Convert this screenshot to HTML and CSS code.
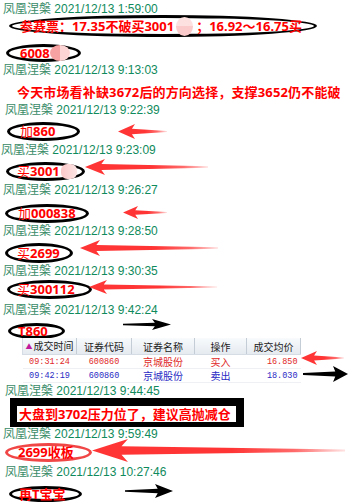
FILE: index.html
```html
<!DOCTYPE html>
<html lang="zh-CN">
<head>
  <meta charset="UTF-8" />
  <meta name="viewport" content="width=device-width, initial-scale=1.0" />
  <title>凤凰涅槃 盘中记录</title>
  <link rel="stylesheet" href="styles.css">
</head>
<body>
  <div class="feed">
    <div class="meta"><span class="nick">凤凰涅槃</span> 2021/12/13 1:59:00</div>
    <div class="post post-first">
      <div class="ring ring-ticket">参赛票：17.35不破买3001<i class="blur blur-wide"></i>；16.92～16.75买</div>
      <div class="ring ring-6008">6008<i class="blur blur-half"></i></div>
    </div>

    <div class="meta"><span class="nick">凤凰涅槃</span> 2021/12/13 9:13:03</div>
    <div class="post post-note">今天市场看补缺3672后的方向选择，支撑3652仍不能破</div>

    <div class="meta meta-in"><span class="nick">凤凰涅槃</span> 2021/12/13 9:22:39</div>
    <div class="post">
      <div class="ring ring-860"><span class="thin">加</span>860</div>
      <div class="arrow arrow-red arrow-860"></div>
    </div>

    <div class="meta meta-out"><span class="nick">凤凰涅槃</span> 2021/12/13 9:23:09</div>
    <div class="post">
      <div class="ring ring-3001"><span class="thin">买</span>3001<i class="blur blur-small"></i></div>
      <div class="arrow arrow-red arrow-3001"></div>
    </div>

    <div class="meta"><span class="nick">凤凰涅槃</span> 2021/12/13 9:26:27</div>
    <div class="post post-tall">
      <div class="ring ring-838"><span class="thin">加</span>000838</div>
      <div class="arrow arrow-red arrow-838"></div>
    </div>

    <div class="meta"><span class="nick">凤凰涅槃</span> 2021/12/13 9:28:50</div>
    <div class="post">
      <div class="ring ring-2699"><span class="thin">买</span>2699</div>
      <div class="arrow arrow-red arrow-2699"></div>
    </div>

    <div class="meta"><span class="nick">凤凰涅槃</span> 2021/12/13 9:30:35</div>
    <div class="post post-short">
      <div class="ring ring-112"><span class="thin">买</span>300112</div>
      <div class="arrow arrow-red arrow-112"></div>
    </div>

    <div class="meta"><span class="nick">凤凰涅槃</span> 2021/12/13 9:42:24</div>
    <div class="post post-trade">
      <div class="trade-head">
        <div class="ring ring-t860">T860</div>
        <div class="arrow arrow-black arrow-t860"></div>
      </div>
      <div class="trade-row">
        <table class="deals">
          <colgroup>
            <col class="c-time"><col class="c-code"><col class="c-name"><col class="c-op"><col class="c-price">
          </colgroup>
          <thead>
            <tr>
              <th><span class="sort">▲</span>成交时间</th>
              <th>证券代码</th>
              <th>证券名称</th>
              <th>操作</th>
              <th>成交均价</th>
            </tr>
          </thead>
          <tbody>
            <tr class="buy">
              <td class="mono">09:31:24</td>
              <td class="mono">600860</td>
              <td>京城股份</td>
              <td>买入</td>
              <td class="mono num">16.850</td>
            </tr>
            <tr class="sell">
              <td class="mono">09:42:19</td>
              <td class="mono">600860</td>
              <td>京城股份</td>
              <td>卖出</td>
              <td class="mono num">18.030</td>
            </tr>
          </tbody>
        </table>
        <div class="trade-arrows">
          <div class="arrow arrow-red arrow-buy"></div>
          <div class="arrow arrow-black arrow-sell"></div>
        </div>
      </div>
    </div>

    <div class="meta meta-in"><span class="nick">凤凰涅槃</span> 2021/12/13 9:44:45</div>
    <div class="post post-box">
      <div class="notice">大盘到3702压力位了，建议高抛减仓</div>
    </div>

    <div class="meta"><span class="nick">凤凰涅槃</span> 2021/12/13 9:59:49</div>
    <div class="post post-low">
      <div class="ring ring-red">2699收板</div>
      <div class="arrow arrow-red arrow-close"></div>
    </div>

    <div class="meta meta-in"><span class="nick">凤凰涅槃</span> 2021/12/13 10:27:46</div>
    <div class="post">
      <div class="ring ring-baby">再T宝宝</div>
      <div class="arrow arrow-black arrow-baby"></div>
    </div>
  </div>
</body>
</html>
```

FILE: styles.css
```css
body {
  margin: 0;
  background-color: #ffffff;
  font-family: "Liberation Sans", "Noto Sans CJK SC", sans-serif;
}
.feed {
  width: 351px;
  height: 503px;
  overflow: hidden;
}

/* name + time line */
.meta {
  height: 15px;
  line-height: 15px;
  font-size: 12px;
  color: #0f8a5c;
  padding-left: 3px;
  white-space: nowrap;
}
.meta-in {
  padding-left: 5px;
}
.meta-out {
  padding-left: 1px;
}
.nick {
  color: #3a8c68;
  font-family: "Noto Sans CJK SC", sans-serif;
}

/* message body */
.post {
  display: flex;
  align-items: flex-start;
  height: 25px;
}
.post-tall {
  height: 26px;
}
.post-short {
  height: 24px;
}
.post-first {
  flex-direction: column;
  height: 46px;
}
.post-note {
  height: 17px;
  padding: 8px 0 0 17px;
  color: #ff0000;
  font: bold 13px/16px "Noto Sans", "Noto Sans CJK SC", sans-serif;
  letter-spacing: 0.15px;
  white-space: nowrap;
}

/* hand drawn circles */
.ring {
  flex: none;
  box-sizing: border-box;
  display: flex;
  align-items: center;
  border: 3px solid #000000;
  border-radius: 50%;
  color: #ff0000;
  font: bold 13px/13px "Noto Sans", "Noto Sans CJK SC", sans-serif;
  white-space: nowrap;
}
.thin {
  font-weight: normal;
}
.ring-ticket {
  margin-left: 9px;
  width: 308px;
  height: 22px;
  padding-left: 8px;
}
.ring-6008 {
  margin: 7px 0 0 6px;
  width: 75px;
  height: 18px;
  padding-left: 11px;
}
.ring-860 {
  margin: 6px 0 0 7px;
  width: 73px;
  height: 19px;
  padding-left: 10px;
}
.ring-3001 {
  margin: 6px 0 0 6px;
  width: 79px;
  height: 19px;
  padding-left: 8px;
}
.ring-838 {
  margin: 8px 0 0 5px;
  width: 84px;
  height: 19px;
  padding-left: 10px;
}
.ring-2699 {
  margin: 6px 0 0 5px;
  width: 68px;
  height: 20px;
  padding-left: 9px;
}
.ring-112 {
  margin: 3px 0 0 7px;
  width: 85px;
  height: 19px;
  padding-left: 7px;
}
.ring-t860 {
  margin: 7px 0 0 8px;
  width: 57px;
  height: 16px;
  padding-left: 7px;
}
.ring-red {
  margin: 3px 0 0 5px;
  width: 87px;
  height: 19px;
  padding-left: 10px;
  border-color: #f04646;
}
.ring-baby {
  margin: 8px 0 0 9px;
  width: 73px;
  height: 16px;
  padding-left: 7px;
}

/* mosaic left over the hidden codes */
.blur {
  display: inline-block;
  flex: none;
  border-radius: 50%;
  background-color: #fdd6d6;
}
.blur-wide {
  width: 17px;
  height: 19px;
  margin: 0 3px 0 2px;
  background: linear-gradient(180deg, #fde0e0 50%, #fbcaca 50%);
}
.blur-half {
  width: 20px;
  height: 16px;
  background: linear-gradient(90deg, #f7a2a2 50%, #fdd4d4 50%);
}
.blur-small {
  width: 16px;
  height: 15px;
  margin-left: 1px;
  border-radius: 40%;
  background: linear-gradient(90deg, #fcc8c8, #fde4e4);
}

/* arrows */
.arrow {
  flex: none;
}
.arrow-red {
  background: linear-gradient(90deg, #ff3535 55%, #ff6a6a 80%, #ffe2e2);
  clip-path: polygon(0 50%, var(--head) 0, calc(var(--head) * 0.82) 32%, 100% 46%, 100% 54%, calc(var(--head) * 0.82) 68%, var(--head) 100%);
}
.arrow-black {
  background-color: #000000;
  clip-path: polygon(100% 50%, calc(100% - var(--head)) 0, calc(100% - var(--head) * 0.85) 34%, 0 44%, 0 56%, calc(100% - var(--head) * 0.85) 66%, calc(100% - var(--head)) 100%);
}
.arrow-860 {
  --head: 17px;
  margin: 8px 0 0 38px;
  width: 49px;
  height: 15px;
}
.arrow-3001 {
  --head: 20px;
  margin-top: 3px;
  width: 123px;
  height: 16px;
}
.arrow-838 {
  --head: 15px;
  margin: 10px 0 0 34px;
  width: 44px;
  height: 13px;
}
.arrow-2699 {
  --head: 20px;
  margin: 3px 0 0 7px;
  width: 138px;
  height: 16px;
}
.arrow-112 {
  --head: 18px;
  margin: 3px 0 0 -3px;
  width: 128px;
  height: 14px;
}
.arrow-t860 {
  --head: 19px;
  margin: 3px 0 0 58px;
  width: 48px;
  height: 11px;
}
.arrow-close {
  --head: 36px;
  margin-top: -1px;
  width: 253px;
  height: 23px;
}
.arrow-baby {
  --head: 18px;
  margin: 6px 0 0 43px;
  width: 48px;
  height: 14px;
}

/* trade screenshot */
.post-trade {
  flex-direction: column;
  height: 66px;
}
.trade-head {
  display: flex;
  align-items: flex-start;
  height: 22px;
}
.trade-row {
  display: flex;
  align-items: flex-start;
  margin-left: 22px;
}
.deals {
  width: 278px;
  table-layout: fixed;
  border-collapse: collapse;
  font-family: "Noto Sans CJK SC", sans-serif;
  font-size: 10px;
}
.c-time { width: 54px; }
.c-code { width: 55px; }
.c-name { width: 63px; }
.c-op { width: 52px; }
.c-price { width: 54px; }
.deals th {
  height: 16px;
  padding: 0;
  font-weight: normal;
  color: #222222;
  line-height: 15px;
  background: linear-gradient(180deg, #f8fafc, #e5eaf0);
  border-right: 1px solid #c4ccd6;
  border-bottom: 1px solid #d6dce4;
}
.deals th:first-child {
  border-left: 1px solid #d6dce4;
}
.sort {
  font-size: 7px;
  color: #c0189c;
  margin-right: 1px;
  vertical-align: 1px;
}
.deals td {
  height: 13px;
  padding: 0;
  line-height: 12px;
  text-align: center;
  white-space: nowrap;
  overflow: hidden;
  border-bottom: 1px solid #eef0f4;
}
.deals .mono {
  font-family: "Liberation Mono", monospace;
  font-size: 8.5px;
}
.deals .num {
  text-align: right;
  padding-right: 3px;
}
.buy td {
  color: #e02828;
}
.sell td {
  color: #2a2ac4;
}
.trade-arrows {
  display: flex;
  flex-direction: column;
}
.arrow-buy {
  --head: 16px;
  margin-top: 13px;
  width: 43px;
  height: 14px;
}
.arrow-sell {
  --head: 15px;
  margin: 1px 0 0 2px;
  width: 45px;
  height: 16px;
}

/* boxed notice */
.post-box {
  height: 28px;
}
.notice {
  box-sizing: border-box;
  margin: 1px 0 0 10px;
  width: 234px;
  height: 29px;
  border-style: solid;
  border-color: #000000;
  border-width: 8px 8px 5px 7px;
  padding-left: 2px;
  background-color: #ffffff;
  color: #ff0000;
  font: bold 13px/16px "Noto Sans", "Noto Sans CJK SC", sans-serif;
  white-space: nowrap;
}
.post-low {
  height: 23px;
}
```
